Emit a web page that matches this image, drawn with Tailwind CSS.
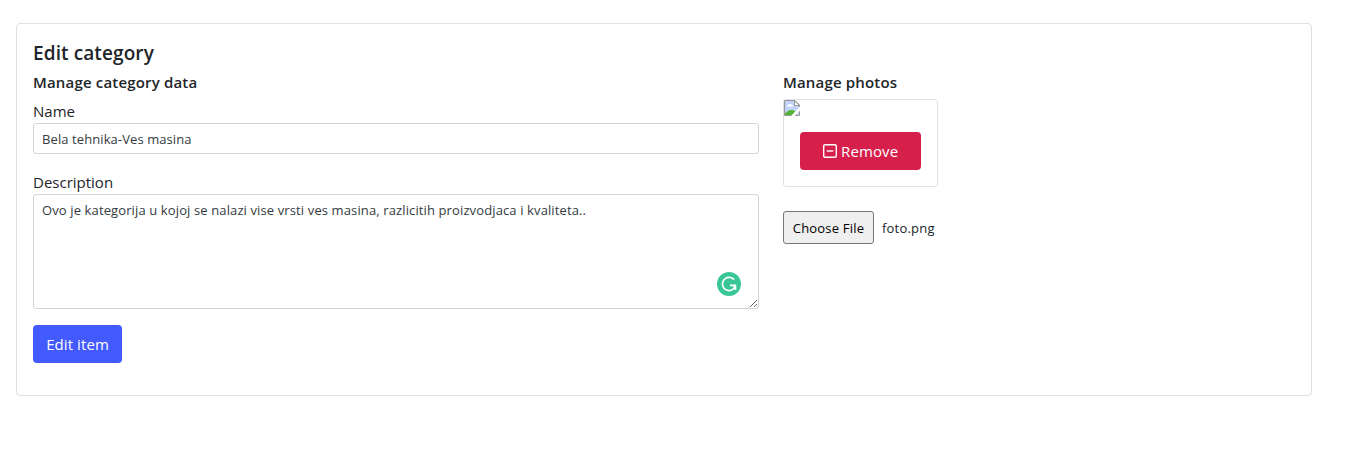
<!DOCTYPE html>
<html lang="en">
<head>
<meta charset="utf-8">
<title>Edit category</title>
<script src="https://cdn.jsdelivr.net/npm/@tailwindcss/browser@4"></script>
</head>
<body class="bg-white font-['Open_Sans','Noto_Sans',sans-serif] text-[#212529]">
<main class="pt-[23px] pl-4">
  <section class="flex h-[373px] w-[1296px] flex-col rounded border border-[#dfdfdf] px-4 pt-4">
    <h1 class="h-6 text-[19px] leading-[26px] font-semibold tracking-[0.1px] whitespace-nowrap">Edit category</h1>
    <div class="mt-2 flex gap-6">
      <form class="flex w-[726px] flex-col items-start">
        <h2 class="h-[19px] text-[15px] leading-[21px] font-semibold tracking-[0.17px] whitespace-nowrap">Manage category data</h2>
        <label for="name" class="mt-2 h-6 text-[15px] leading-6">Name</label>
        <input id="name" type="text" value="Bela tehnika-Ves masina" class="h-[31px] w-full rounded-[3px] border border-[#ced4da] px-2 text-[13px] tracking-[0.09px] text-[#343a40]">
        <label for="desc" class="mt-4 h-6 text-[15px] leading-6">Description</label>
        <div class="relative h-[115px] w-full">
          <textarea id="desc" class="block h-[115px] w-full resize rounded-[3px] border border-[#ced4da] px-2 py-[5px] text-[13px] leading-[21px] tracking-[0.12px] text-[#343a40]">Ovo je kategorija u kojoj se nalazi vise vrsti ves masina, razlicitih proizvodjaca i kvaliteta..</textarea>
          <svg class="absolute right-[18px] bottom-[13px] size-6" viewBox="0 0 24 24" fill="none" stroke="#fff" stroke-width="1.7">
            <circle cx="12" cy="12" r="12" fill="#3ac796" stroke="none"/>
            <path d="M17 7.6A6.6 6.6 0 1 0 14.8 18Q17 17 17.6 14.6M13 13.4H18.4V18"/>
          </svg>
        </div>
        <button type="button" class="mt-4 h-[38px] w-[89px] rounded bg-[#435aff] text-[15px] tracking-[0.08px] text-white">Edit item</button>
      </form>
      <div class="flex flex-col items-start">
        <h2 class="h-[19px] text-[15px] leading-[21px] font-semibold tracking-[0.17px] whitespace-nowrap">Manage photos</h2>
        <div class="mt-2 flex h-[88px] w-[155px] flex-col rounded-[3px] border border-[#dee2e6]">
          <svg class="size-4" viewBox="0 0 16 16">
            <path d="M.5.5H11L15.5 5V15.5H.5Z" fill="#c1d3fa" stroke="#979797"/>
            <path d="M3 6.5V5.5L4 5L5 4H7L8 5L9 5.5V6.5Z" fill="#fff"/>
            <path d="M1 15V13.5C3 11 6 9.5 8.5 10L13 12V15Z" fill="#52b432"/>
            <path d="M10.5.5V5.5H15.5Z" fill="#fff" stroke="#979797"/>
            <path d="M16 6.5L7 16H11L16 10.5Z" fill="#fff"/>
          </svg>
          <button type="button" class="mt-4 ml-4 flex h-[38px] w-[121px] items-center rounded bg-[#d61f4b] pl-[23px] text-[15px] tracking-[0.12px] text-white">
            <svg class="mr-1 size-[14px] shrink-0" viewBox="0 0 14 14" fill="none" stroke="#fff" stroke-width="1.4"><rect x=".7" y=".7" width="12.6" height="12.6" rx="1.4"/><path d="M3.7 7H10.3"/></svg>
            Remove
          </button>
        </div>
        <div class="mt-6 flex h-[33px] items-center text-[13px] tracking-[0.2px] whitespace-nowrap">
          <button type="button" class="h-[33px] w-[91px] rounded-[3px] border border-[#767676] bg-[#efefef] pt-0.5 text-black">Choose File</button>
          <span class="ml-2 pt-0.5">foto.png</span>
        </div>
      </div>
    </div>
  </section>
</main>
</body>
</html>
